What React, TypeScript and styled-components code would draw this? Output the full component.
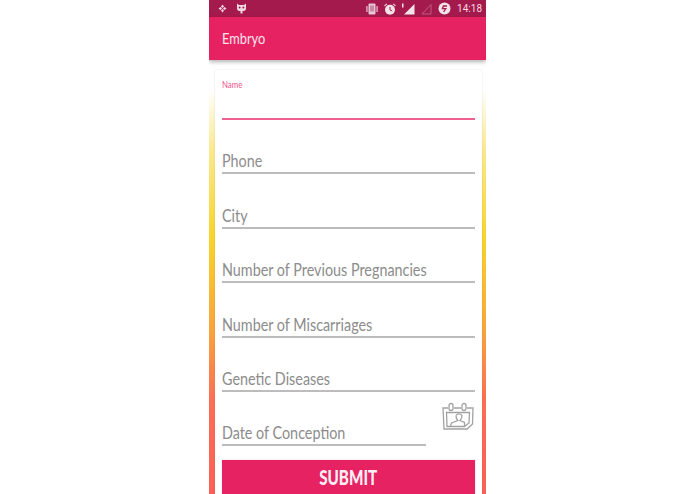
import styled, { createGlobalStyle } from 'styled-components';

const GlobalStyle = createGlobalStyle`
  html, body {
    margin: 0;
    padding: 0;
    background: #fff;
    overflow: hidden;
  }
`;

const Page = styled.div`
  width: 695px;
  height: 494px;
  display: flex;
  justify-content: center;
  overflow: hidden;
  font-family: Lato, "Liberation Sans", sans-serif;
`;

const Phone = styled.div`
  width: 277px;
  height: 494px;
  display: flex;
  flex-direction: column;
  overflow: hidden;
  background: linear-gradient(180deg, #fff 0, #fff 90px, #f9e98f 150px, #f8d32a 240px, #f9a43c 330px, #fb6f55 400px, #fc5f57 494px);
`;

const StatusBar = styled.div`
  height: 17px;
  flex: none;
  background: #a51a4c;
  display: flex;
  align-items: center;
  padding: 0 4px 0 9px;
  color: #f3d9e2;
`;

const StatusLeft = styled.div`
  display: flex;
  align-items: center;
  gap: 9px;
  flex: 1;
`;

const StatusRight = styled.div`
  display: flex;
  align-items: center;
  gap: 6px;
`;

const Clock = styled.span`
  font-family: Roboto, sans-serif;
  font-size: 10px;
`;

// no condensed family is installed, so the text is narrowed by hand
const Narrow = styled.span<{ $scale: number; $center?: boolean }>`
  display: inline-block;
  white-space: nowrap;
  transform: scaleX(${p => p.$scale});
  transform-origin: ${p => (p.$center ? 'center' : 'left')};
`;

const AppBar = styled.div`
  height: 43px;
  flex: none;
  background: #e62263;
  display: flex;
  align-items: center;
  padding: 0 0 2px 13px;
  box-sizing: border-box;
  color: #fbe4ec;
  font-size: 16px;
  box-shadow: 0 2px 4px rgba(0, 0, 0, 0.3);
  position: relative;
  z-index: 1;
`;

const Card = styled.form`
  margin: 10px 4px 0 6px;
  flex: 1;
  background: #fff;
  border-radius: 2px 2px 0 0;
  padding: 0 7px;
  display: flex;
  flex-direction: column;
  box-shadow: 0 0 2px rgba(0, 0, 0, 0.12);
`;

const Field = styled.div<{ $first?: boolean; $short?: boolean }>`
  height: ${p => (p.$first ? '50px' : '54.4px')};
  flex: none;
  box-sizing: border-box;
  display: flex;
  flex-direction: column;
  justify-content: ${p => (p.$first ? 'flex-start' : 'flex-end')};
  border-bottom: 2px solid ${p => (p.$first ? '#f0608f' : '#bcbcbc')};
  width: ${p => (p.$short ? '204px' : '100%')};
`;

const FloatLabel = styled.label`
  color: #f0508a;
  font-size: 9px;
  margin-top: 9px;
`;

const Label = styled.label`
  color: #8c8c8c;
  font-size: 17.5px;
  line-height: 20px;
  padding-bottom: 1px;
  white-space: nowrap;
`;

const DateRow = styled.div`
  position: relative;
`;

const CalendarSlot = styled.div`
  position: absolute;
  right: 1px;
  top: 10px;
  line-height: 0;
`;

const SubmitButton = styled.button`
  margin-top: 14px;
  height: 40px;
  flex: none;
  width: 100%;
  border: 0;
  background: #e62263;
  color: #fdeef3;
  font-family: inherit;
  font-weight: 900;
  font-size: 20px;
  padding: 0 0 6px;
  box-shadow: 0 0 1px #f6a0bd;
`;

const Diamond = () => (
  <svg width="9" height="9" viewBox="0 0 9 9" fill="#f3d9e2">
    <path d="M4.5 0.5 6 2.5 4.5 4 3 2.5zM4.5 5 6 6.5 4.5 8.5 3 6.5zM0.5 4.5 2.5 3 4 4.5 2.5 6zM5 4.5 6.5 3 8.5 4.5 6.5 6z" />
  </svg>
);

const CatFace = () => (
  <svg width="11" height="11" viewBox="0 0 11 11" fill="#f3d9e2">
    <path d="M1 0.5 3 2h5l2-1.5V5.5C10 7.5 8.5 8 6.5 8V10.5h-2V8C2.5 8 1 7.5 1 5.5z" />
    <circle cx="3.6" cy="4.6" r="1" fill="#a51a4c" />
    <circle cx="7.4" cy="4.6" r="1" fill="#a51a4c" />
  </svg>
);

const Vibrate = () => (
  <svg width="12" height="12" viewBox="0 0 12 12" fill="#e9c6d3">
    <rect x="2.5" y="0.5" width="7" height="11" rx="1" />
    <rect x="4" y="2.5" width="4" height="6" fill="#c58aa2" />
    <rect x="0.3" y="3" width="1.2" height="6" />
    <rect x="10.5" y="3" width="1.2" height="6" />
  </svg>
);

const AlarmClock = () => (
  <svg width="12" height="12" viewBox="0 0 12 12">
    <circle cx="6" cy="6.7" r="5" fill="#f5e3ea" />
    <path d="M6 3.8V6.8L8.2 8" stroke="#a51a4c" strokeWidth="1" fill="none" />
    <path d="M0.5 2.8 2.8 0.8M11.5 2.8 9.2 0.8" stroke="#f5e3ea" strokeWidth="1.1" />
  </svg>
);

const SignalFull = () => (
  <svg width="13" height="12" viewBox="0 0 13 12">
    <rect x="0" y="0.5" width="1.5" height="4" fill="#f5e3ea" />
    <path d="M12.5 1V11.5H2z" fill="#f5e3ea" />
  </svg>
);

const SignalEmpty = () => (
  <svg width="11" height="12" viewBox="0 0 11 12">
    <path d="M10 1.5V11H1z" fill="none" stroke="#c56a8a" strokeWidth="0.8" />
  </svg>
);

const DataSaver = () => (
  <svg width="13" height="13" viewBox="0 0 13 13">
    <circle cx="6.5" cy="6.5" r="6" fill="#f5e3ea" />
    <path d="M9 4H5.4L4.4 6.6H7.8L5.6 10" stroke="#a51a4c" strokeWidth="1.3" fill="none" />
  </svg>
);

const CalendarIcon = () => (
  <svg width="33" height="29" viewBox="0 0 33 29" fill="none" stroke="#a2a2a2" strokeWidth="1.3">
    <path d="M7 6H2L3 27H26L31.5 22 32 6H26M13 6H20" />
    <path d="M5.5 10.5H28.5L28 21 23.5 24.5H6z" />
    <rect x="8" y="1.5" width="4" height="7" rx="2" />
    <rect x="21" y="1.5" width="4" height="7" rx="2" />
    <path d="M15 13.5a3.5 3.5 0 0 1 6 0c0 2.5-1 4-2 5l4.5 2v3.5" />
    <path d="M15 13.5c0 2.5 0.6 4 1.8 5L10.5 21 9.5 24" />
  </svg>
);

const LABEL_SCALE = 0.82;

const FIELDS = ['Phone', 'City', 'Number of Previous Pregnancies', 'Number of Miscarriages', 'Genetic Diseases'];

const App = () => {
  return (
    <>
      <GlobalStyle />
      <Page>
        <Phone>
          <StatusBar>
            <StatusLeft>
              <Diamond />
              <CatFace />
            </StatusLeft>
            <StatusRight>
              <Vibrate />
              <AlarmClock />
              <SignalFull />
              <SignalEmpty />
              <DataSaver />
              <Clock>14:18</Clock>
            </StatusRight>
          </StatusBar>
          <AppBar>
            <Narrow $scale={0.8}>Embryo</Narrow>
          </AppBar>
          <Card>
            <Field $first>
              <FloatLabel>
                <Narrow $scale={0.87}>Name</Narrow>
              </FloatLabel>
            </Field>
            {FIELDS.map(name => (
              <Field key={name}>
                <Label>
                  <Narrow $scale={LABEL_SCALE}>{name}</Narrow>
                </Label>
              </Field>
            ))}
            <DateRow>
              <Field $short>
                <Label>
                  <Narrow $scale={LABEL_SCALE}>Date of Conception</Narrow>
                </Label>
              </Field>
              <CalendarSlot>
                <CalendarIcon />
              </CalendarSlot>
            </DateRow>
            <SubmitButton type="button">
              <Narrow $scale={0.76} $center>SUBMIT</Narrow>
            </SubmitButton>
          </Card>
        </Phone>
      </Page>
    </>
  );
};

export default App;
